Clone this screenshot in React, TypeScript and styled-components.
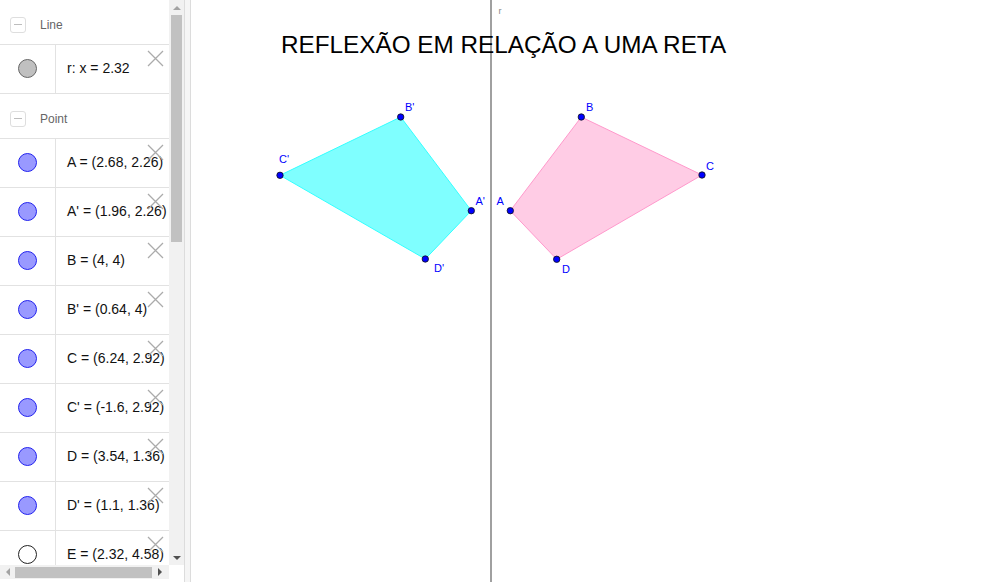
import React from "react";
import styled, { createGlobalStyle } from "styled-components";

const GlobalStyle = createGlobalStyle`
  html, body { margin: 0; padding: 0; background: #fff; overflow: hidden; }
  body { font-family: "Liberation Sans", Arial, sans-serif; }
`;

const Page = styled.div`
  display: flex;
  width: 1000px;
  height: 582px;
  background: #fff;
`;

const SidePanel = styled.div`
  width: 184px;
  display: flex;
  flex-direction: column;
  border-right: 1px solid #dcdcdc;
  background: #fff;
`;

const ListArea = styled.div`
  display: flex;
  height: 565px;
`;

const List = styled.div`
  width: 169px;
  overflow: hidden;
  display: flex;
  flex-direction: column;
`;

const GroupHeader = styled.div`
  height: 45px;
  flex-shrink: 0;
  box-sizing: border-box;
  padding: 5px 0 0 10px;
  display: flex;
  align-items: center;
  gap: 14px;
  border-bottom: 1px solid #e2e2e2;
  font-size: 12px;
  color: #666;
  white-space: nowrap;
`;

const CollapseBox = styled.div`
  width: 16px;
  height: 16px;
  box-sizing: border-box;
  border: 1px solid #dedede;
  border-radius: 3px;
  display: flex;
  align-items: center;
  justify-content: center;
  &::before {
    content: "";
    width: 8px;
    height: 1.5px;
    background: #bdbdbd;
  }
`;

const Row = styled.div`
  position: relative;
  height: 48px;
  display: grid;
  grid-template-columns: 56px 1fr;
  border-bottom: 1px solid #e2e2e2;
  flex-shrink: 0;
`;

const IconCell = styled.div`
  border-right: 1px solid #e2e2e2;
  display: flex;
  align-items: center;
  justify-content: center;
  padding-bottom: 2px;
`;

const Marble = styled.div<{ $fill: string; $stroke: string }>`
  width: 19px;
  height: 19px;
  border-radius: 50%;
  box-sizing: border-box;
  background: ${(p) => p.$fill};
  border: 1px solid ${(p) => p.$stroke};
`;

const TextCell = styled.div`
  display: flex;
  align-items: center;
  padding: 0 0 3px 11px;
  font-size: 14px;
  color: #111;
  white-space: pre;
`;

const CloseIcon = styled.svg`
  position: absolute;
  left: 147px;
  top: 5px;
  width: 17px;
  height: 17px;
`;

const VScroll = styled.div`
  width: 15px;
  background: #f1f1f1;
  display: flex;
  flex-direction: column;
  align-items: center;
`;

const ArrowBox = styled.div`
  width: 15px;
  height: 15px;
  display: flex;
  align-items: center;
  justify-content: center;
  flex-shrink: 0;
`;

const Tri = styled.div<{ $dir: "up" | "down" | "left" | "right"; $color: string }>`
  width: 0;
  height: 0;
  ${(p) =>
    p.$dir === "up"
      ? `border-left: 4px solid transparent; border-right: 4px solid transparent; border-bottom: 4px solid ${p.$color};`
      : p.$dir === "down"
      ? `border-left: 4px solid transparent; border-right: 4px solid transparent; border-top: 4px solid ${p.$color};`
      : p.$dir === "left"
      ? `border-top: 4px solid transparent; border-bottom: 4px solid transparent; border-right: 4px solid ${p.$color};`
      : `border-top: 4px solid transparent; border-bottom: 4px solid transparent; border-left: 4px solid ${p.$color};`}
`;

const VThumb = styled.div`
  width: 11px;
  height: 227px;
  background: #c1c1c1;
  flex-shrink: 0;
`;

const Spacer = styled.div`
  flex: 1;
`;

const HScrollRow = styled.div`
  display: flex;
  height: 14px;
`;

const HTrack = styled.div`
  width: 169px;
  background: #f1f1f1;
  display: flex;
  align-items: center;
`;

const HThumb = styled.div`
  width: 137px;
  height: 11px;
  background: #c1c1c1;
`;

const HArrow = styled.div`
  width: 15px;
  height: 14px;
  display: flex;
  align-items: center;
  justify-content: center;
`;

const Corner = styled.div`
  flex: 1;
  background: #fff;
`;

const Splitter = styled.div`
  width: 5px;
  background: #f5f5f5;
  border-right: 1px solid #dcdcdc;
`;

const Canvas = styled.div`
  position: relative;
  flex: 1;
  overflow: hidden;
  background: #fff;
`;

const Title = styled.div`
  position: absolute;
  left: 90px;
  top: 32px;
  font-size: 24.3px;
  line-height: 25px;
  color: #000;
  white-space: nowrap;
`;

const Drawing = styled.svg`
  display: block;
  width: 809px;
  height: 582px;
`;

type Item = { text: string; fill: string; stroke: string };

const lineItems: Item[] = [{ text: "r: x = 2.32", fill: "#c0c0c0", stroke: "#666" }];

const blue = { fill: "#9999ff", stroke: "#2222ee" };
const pointItems: Item[] = [
  { text: "A = (2.68, 2.26)", ...blue },
  { text: "A' = (1.96, 2.26)", ...blue },
  { text: "B = (4, 4)", ...blue },
  { text: "B' = (0.64, 4)", ...blue },
  { text: "C = (6.24, 2.92)", ...blue },
  { text: "C' = (-1.6, 2.92)", ...blue },
  { text: "D = (3.54, 1.36)", ...blue },
  { text: "D' = (1.1, 1.36)", ...blue },
  { text: "E = (2.32, 4.58)", fill: "#ffffff", stroke: "#222" },
];

const Close = () => (
  <CloseIcon viewBox="0 0 17 17">
    <path d="M1 1 L16 16 M16 1 L1 16" stroke="#ababab" strokeWidth="1.3" fill="none" />
  </CloseIcon>
);

const ItemRow = ({ item }: { item: Item }) => (
  <Row>
    <IconCell>
      <Marble $fill={item.fill} $stroke={item.stroke} />
    </IconCell>
    <TextCell>{item.text}</TextCell>
    <Close />
  </Row>
);

const Group = ({ name }: { name: string }) => (
  <GroupHeader>
    <CollapseBox />
    <span>{name}</span>
  </GroupHeader>
);

type P = [number, number];
const A: P = [510.3, 210.7];
const B: P = [581.3, 117];
const C: P = [702, 175];
const D: P = [556.7, 259.3];
const A2: P = [471.3, 210.7];
const B2: P = [400.7, 117];
const C2: P = [280, 175.3];
const D2: P = [425.3, 259];

const pts = (arr: P[]) => arr.map((p) => p.join(",")).join(" ");

const labels: { t: string; x: number; y: number }[] = [
  { t: "B'", x: 405, y: 111 },
  { t: "C'", x: 279, y: 163 },
  { t: "A'", x: 475.5, y: 205 },
  { t: "D'", x: 434, y: 271.5 },
  { t: "B", x: 586, y: 111 },
  { t: "C", x: 706, y: 170 },
  { t: "A", x: 496.5, y: 205 },
  { t: "D", x: 562, y: 272.5 },
];

export default function App() {
  return (
    <Page>
      <GlobalStyle />
      <SidePanel>
        <ListArea>
          <List>
            <Group name="Line" />
            {lineItems.map((it) => (
              <ItemRow key={it.text} item={it} />
            ))}
            <Group name="Point" />
            {pointItems.map((it) => (
              <ItemRow key={it.text} item={it} />
            ))}
          </List>
          <VScroll>
            <ArrowBox>
              <Tri $dir="up" $color="#a3a3a3" />
            </ArrowBox>
            <VThumb />
            <Spacer />
            <ArrowBox>
              <Tri $dir="down" $color="#505050" />
            </ArrowBox>
          </VScroll>
        </ListArea>
        <HScrollRow>
          <HTrack>
            <HArrow>
              <Tri $dir="left" $color="#a3a3a3" />
            </HArrow>
            <HThumb />
            <HArrow>
              <Tri $dir="right" $color="#505050" />
            </HArrow>
          </HTrack>
          <Corner />
        </HScrollRow>
      </SidePanel>
      <Splitter />
      <Canvas>
        <Drawing viewBox="191 0 809 582">
          <rect x="490" y="0" width="2" height="582" fill="#a0a0a0" />
          <text x="498.5" y="14" fontSize="9" fill="#888" fontFamily="Liberation Sans, Arial, sans-serif">
            r
          </text>
          <polygon points={pts([A2, B2, C2, D2])} fill="#7fffff" stroke="#33ffff" strokeWidth="1" />
          <polygon points={pts([A, B, C, D])} fill="#ffcce5" stroke="#ff99cc" strokeWidth="1" />
          {[A, B, C, D, A2, B2, C2, D2].map((p, i) => (
            <circle key={i} cx={p[0]} cy={p[1]} r="3.2" fill="#0000ff" stroke="#111" strokeWidth="0.8" />
          ))}
          {labels.map((l) => (
            <text
              key={l.t}
              x={l.x}
              y={l.y}
              fontSize="11"
              fill="#0000ff"
              fontFamily="Liberation Sans, Arial, sans-serif"
            >
              {l.t}
            </text>
          ))}
        </Drawing>
        <Title>REFLEXÃO EM RELAÇÃO A UMA RETA</Title>
      </Canvas>
    </Page>
  );
}
